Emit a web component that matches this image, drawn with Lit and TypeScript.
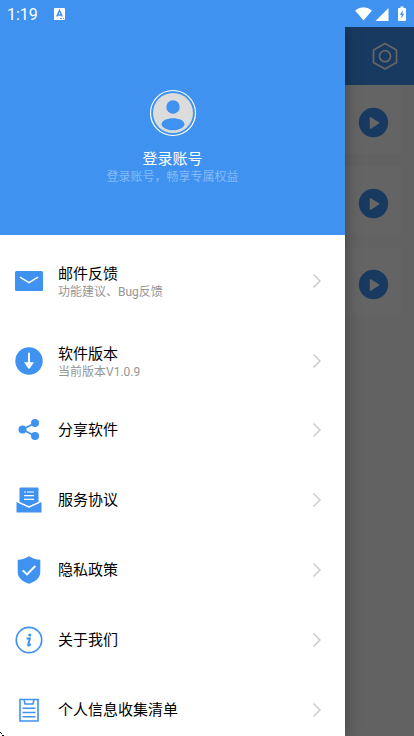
import { LitElement, html, svg, css } from "lit";
import { customElement } from "lit/decorators.js";

interface MenuItem {
  icon: keyof typeof icons;
  title: string;
  note?: string;
}

const icons = {
  mail: svg`
    <rect x="1" y="5" width="28" height="20" rx="1.5" fill="#3f92f0"/>
    <path d="M6 11.2 L15 16.6 L24 11.2" fill="none" stroke="#fff" stroke-width="1.4"/>`,
  version: svg`
    <circle cx="15" cy="15" r="13.7" fill="#3f92f0"/>
    <path d="M15 7.5V17" stroke="#fff" stroke-width="2" stroke-linecap="round"/>
    <path d="M10.5 16.5h9L15.8 22q-.8 1-1.6 0z" fill="#fff" stroke="#fff" stroke-width=".5" stroke-linejoin="round"/>`,
  share: svg`
    <path d="M21 8 L8.500 14.500 L21 21" fill="none" stroke="#3f92f0" stroke-width="1.800"/>
    <circle cx="21" cy="8" r="4" fill="#3f92f0"/>
    <circle cx="8.500" cy="14.500" r="4" fill="#3f92f0"/>
    <circle cx="21" cy="21" r="4" fill="#3f92f0"/>`,
  terms: svg`
    <path d="M5.500 3.500q0-1 1-1h17q1 0 1 1V17L15 21.500 5.500 17z" fill="#3f92f0"/>
    <path d="M2.500 17 L15 22.800 L27.500 17V27.500h-25z" fill="#3f92f0"/>
    <path d="M5 17.500 L15 21.800 L25 17.500" fill="none" stroke="#fff" stroke-width="1.200"/>
    <path d="M10 7h1.800M13 7h7M10 10.700h10M10 14.400h10" stroke="#fff" stroke-width="1.200"/>`,
  privacy: svg`
    <path d="M15 1.300C18 3.300 22 4.600 26.300 4.800V17C26.300 23.500 20.500 27 15 28.700 9.500 27 3.700 23.500 3.700 17V4.800C8 4.600 12 3.300 15 1.300z" fill="#3f92f0"/>
    <path d="M8.800 15.300 L13 19.500 L21.300 11" fill="none" stroke="#fff" stroke-width="1.900"/>`,
  about: svg`
    <circle cx="15" cy="15" r="12.700" fill="none" stroke="#3f92f0" stroke-width="1.700"/>
    <circle cx="15.800" cy="10" r="1.600" fill="#3f92f0"/>
    <path d="M12.500 13.600h3.300L14.200 19.700q-.2 1 .6.800L16.900 19.200" fill="none" stroke="#3f92f0" stroke-width="2"/>`,
  list: svg`
    <path d="M6 4.500h18V26H6z" fill="none" stroke="#3f92f0" stroke-width="1.600"/>
    <path d="M10 4.500L11 9h8L20 4.500" fill="none" stroke="#3f92f0" stroke-width="1.500"/>
    <path d="M8.500 13.200h13M8.500 17.500h13M8.500 21.800h13" stroke="#3f92f0" stroke-width="1.400"/>`,
};

const items: MenuItem[] = [
  { icon: "mail", title: "邮件反馈", note: "功能建议、Bug反馈" },
  { icon: "version", title: "软件版本", note: "当前版本V1.0.9" },
  { icon: "share", title: "分享软件" },
  { icon: "terms", title: "服务协议" },
  { icon: "privacy", title: "隐私政策" },
  { icon: "about", title: "关于我们" },
  { icon: "list", title: "个人信息收集清单" },
];

@customElement("status-bar")
export class StatusBar extends LitElement {
  static styles = css`
    :host {
      position: relative;
      z-index: 1;
      display: flex;
      align-items: center;
      height: 27px;
      padding: 0 6px 0 7px;
      background: #3f92f0;
      color: #fff;
      font: 16px/27px Roboto, sans-serif;
    }
    .clock { padding-top: 1px; }
    .badge { width: 11px; height: 12px; margin-left: 16px; }
    .signals { width: 54px; height: 16px; margin-left: auto; }
  `;
  render() {
    return html`
      <span class="clock">1:19</span>
      <svg class="badge" viewBox="0 0 11 12" aria-hidden="true">
        <rect width="11" height="12" rx="1" fill="#fff"/>
        <path d="M2.800 8.500 L5.500 2.500 L8.200 8.500M3.800 7h3.400" fill="none" stroke="#3f92f0" stroke-width="1.500"/>
        <path d="M6 10.500h2M9 10.500h1" stroke="#3f92f0" stroke-width=".8"/>
      </svg>
      <svg class="signals" viewBox="0 0 54 16" aria-hidden="true">
        <path d="M1 4.500Q9.500-1.800 18 4.500L9.500 14.500z" fill="#fff"/>
        <path d="M34.500 2v13h-13z" fill="#fff"/>
        <path d="M45 2h1.500V.6h3V2H51q1 0 1 1v11q0 1-1 1h-6q-1 0-1-1V3q0-1 1-1z" fill="#fff"/>
        <path d="M49 4.300L45.700 8.800h2L47 12.700l3.300-4.900h-2z" fill="#3f92f0"/>
      </svg>
    `;
  }
}

@customElement("home-page")
export class HomePage extends LitElement {
  static styles = css`
    :host { display: block; height: 100%; background: #f6f6f6; }
    .bar {
      display: flex;
      align-items: center;
      justify-content: flex-end;
      height: 58px;
      padding-right: 15px;
      background: #3f92f0;
    }
    button { display: block; padding: 0; border: 0; background: none; }
    .settings, .settings svg { width: 28px; height: 28px; }
    .cards { display: grid; gap: 12px; padding: 0 12px; }
    .card {
      display: flex;
      align-items: center;
      justify-content: flex-end;
      height: 69px;
      padding: 5px 13px 0 0;
      box-sizing: border-box;
      border-radius: 4px;
      background: #fbfbfb;
    }
    .play, .play svg { width: 31px; height: 31px; }
    svg { display: block; }
  `;
  render() {
    return html`
      <header class="bar">
        <button class="settings" aria-label="设置">
          <svg viewBox="0 0 28 28" fill="none" stroke="#fff" stroke-width="1.700">
            <path d="M14 1.500L25.500 8V20.500L14 27 2.500 20.500V8z"/>
            <circle cx="14" cy="14.200" r="5.500"/>
          </svg>
        </button>
      </header>
      <div class="cards">
        ${[1, 2, 3].map(() => html`
          <div class="card">
            <button class="play" aria-label="播放">
              <svg viewBox="0 0 31 31">
                <circle cx="15.500" cy="15.500" r="14.700" fill="#3f92f0"/>
                <path d="M12.500 10.800V21L20.500 15.900z" fill="#fff" stroke="#fff" stroke-width="1.500" stroke-linejoin="round"/>
              </svg>
            </button>
          </div>`)}
      </div>
    `;
  }
}

@customElement("side-drawer")
export class SideDrawer extends LitElement {
  static styles = css`
    :host { display: block; overflow: hidden; background: #fff; }
    button {
      display: block;
      padding: 0;
      border: 0;
      background: none;
      color: inherit;
      font: inherit;
      text-align: inherit;
    }
    svg { display: block; flex: none; }
    .account {
      display: flex;
      flex-direction: column;
      align-items: center;
      width: 100%;
      height: 208px;
      padding-top: 62px;
      background: #3f92f0;
      color: #fff;
      box-sizing: border-box;
    }
    .avatar { width: 48px; height: 48px; margin-bottom: 12px; }
    .name { display: block; font-size: 15px; line-height: 20px; }
    .note { display: block; font-size: 12px; line-height: 16px; color: #969696; }
    .account .note { color: #85baf6; }
    .menu { margin: 0; padding: 0; list-style: none; }
    .row {
      display: flex;
      align-items: center;
      width: 100%;
      height: 70px;
      padding: 0 23px 0 14px;
    }
    .row.detailed { height: 68px; margin-top: 12px; }
    .detailed .text { padding-top: 2px; }
    .icon { width: 30px; height: 30px; margin-right: 14px; }
    .text { flex: 1; }
    .arrow { width: 10px; height: 16px; }
  `;
  render() {
    return html`
      <button class="account">
        <svg class="avatar" viewBox="0 0 48 48" aria-hidden="true">
          <circle cx="24" cy="24" r="22.500" fill="none" stroke="#fff" stroke-width="1.200"/>
          <circle cx="24" cy="24" r="20" fill="#dcdcdc"/>
          <circle cx="24" cy="18" r="6.700" fill="#3f92f0"/>
          <path d="M12.500 35.500C12.500 27 35.500 27 35.500 35.500 35.500 37.500 31 41.300 24 41.300S12.500 37.500 12.500 35.500z" fill="#3f92f0"/>
        </svg>
        <span class="name">登录账号</span>
        <span class="note">登录账号，畅享专属权益</span>
      </button>
      <ul class="menu">
        ${items.map((item) => html`
          <li>
            <button class="row ${item.note ? "detailed" : ""}">
              <svg class="icon" viewBox="0 0 30 30" aria-hidden="true">${icons[item.icon]}</svg>
              <span class="text">
                <span class="name">${item.title}</span>
                ${item.note ? html`<span class="note">${item.note}</span>` : ""}
              </span>
              <svg class="arrow" viewBox="0 0 10 16" aria-hidden="true">
                <path d="M1.500 1.500L8 8L1.500 14.500" fill="none" stroke="#c8c8c8" stroke-width="1.400"/>
              </svg>
            </button>
          </li>`)}
      </ul>
    `;
  }
}

@customElement("app-root")
export class AppRoot extends LitElement {
  static styles = css`
    :host {
      display: flex;
      flex-direction: column;
      height: 100vh;
      overflow: hidden;
      color: #000;
      font-family: Roboto, "Noto Sans CJK SC", sans-serif;
    }
    .stage { position: relative; flex: 1; min-height: 0; }
    .scrim { position: absolute; inset: 0; background: rgba(0, 0, 0, 0.6); }
    .drawer {
      position: absolute;
      inset: 0 auto 0 0;
      width: calc(100% * 5 / 6);
      box-shadow: 0 0 14px rgba(0, 0, 0, 0.35);
    }
    .corner { position: absolute; left: 0; bottom: 0; width: 4px; height: 4px; }
  `;
  render() {
    return html`
      <status-bar></status-bar>
      <main class="stage">
        <home-page></home-page>
        <div class="scrim"></div>
        <side-drawer class="drawer"></side-drawer>
        <svg class="corner" viewBox="0 0 4 4" aria-hidden="true">
          <path d="M0 0h1v1H0zM1 1h1v1H1zM2 3h2v1H2z" fill="#000"/>
        </svg>
      </main>
    `;
  }
}
